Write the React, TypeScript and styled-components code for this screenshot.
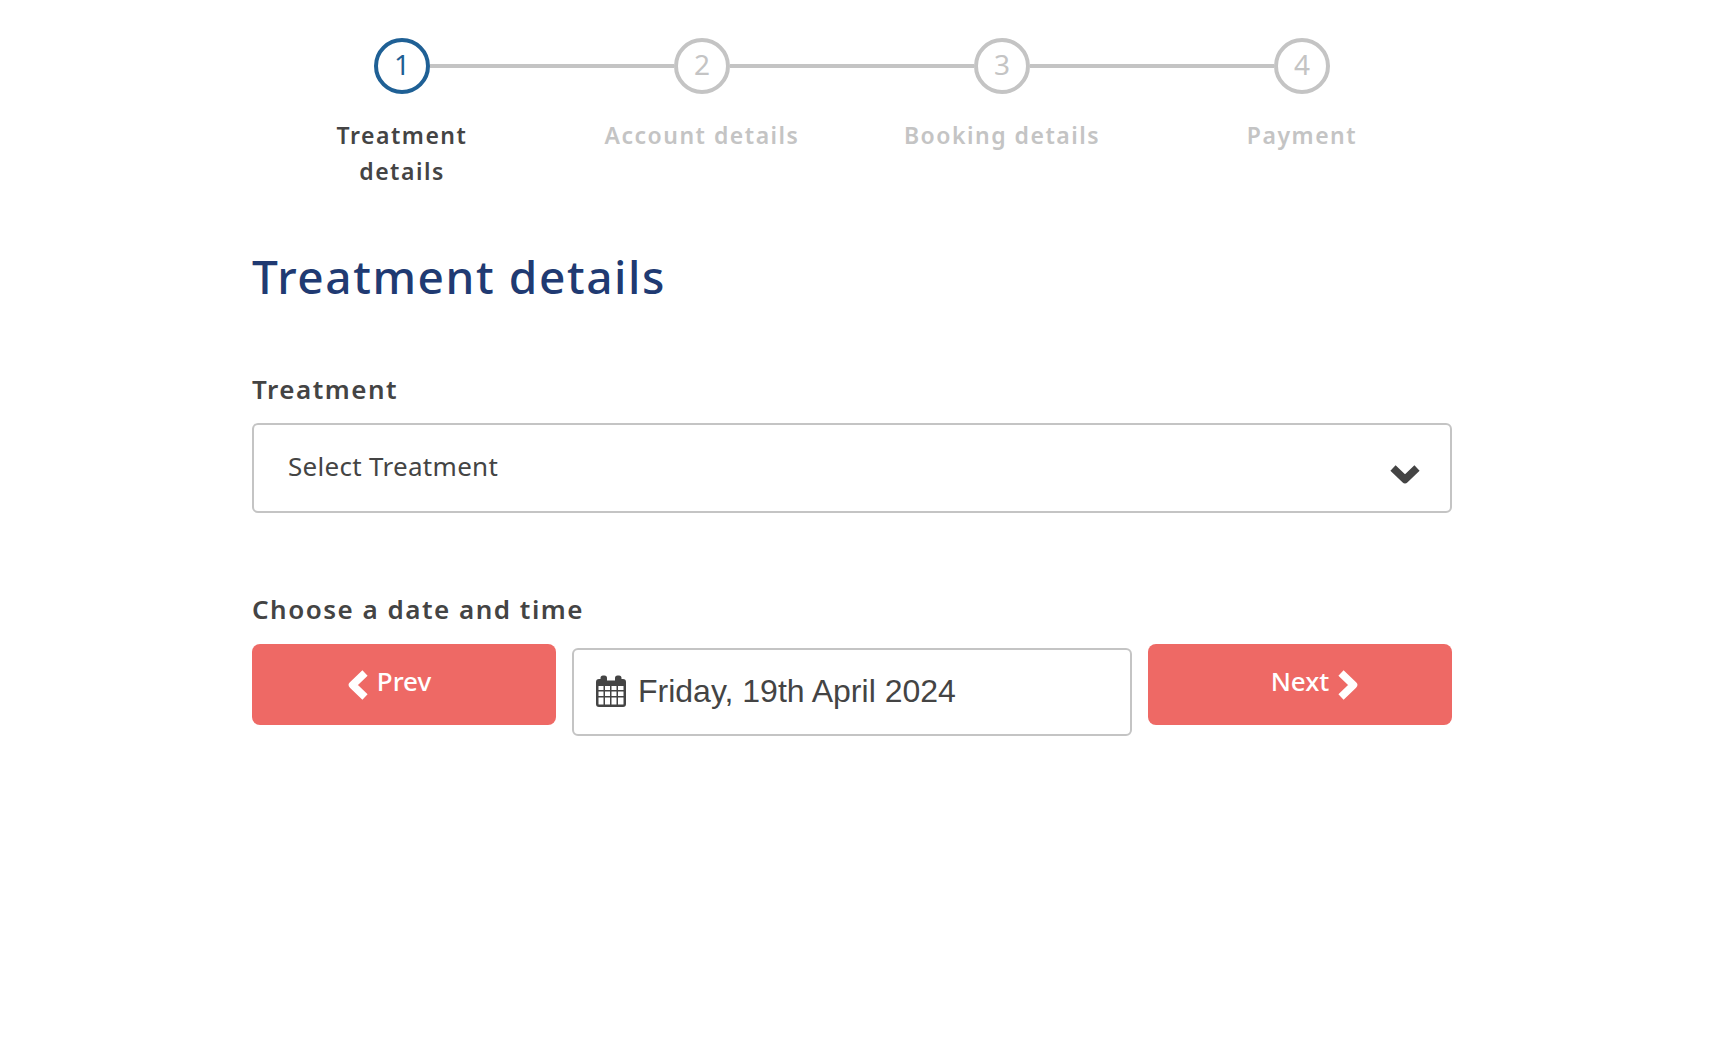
import * as React from 'react';
import styled, {createGlobalStyle} from 'styled-components';

const GlobalStyle = createGlobalStyle`
  html, body {
    margin: 0;
    padding: 0;
    background: #fff;
    font-family: "Noto Sans", "Liberation Sans", sans-serif;
  }
`;

const Page = styled.div`
  width: 1200px;
  min-height: 1060px;
  margin-left: 252px;
  box-sizing: border-box;
  padding-top: 38px;
  color: #444;
`;

const Stepper = styled.ol`
  display: grid;
  grid-template-columns: repeat(4, 300px);
  margin: 0;
  padding: 0;
  list-style: none;
`;

const Step = styled.li<{ $first?: boolean }>`
  position: relative;
  display: flex;
  flex-direction: column;
  align-items: center;

  &::before {
    content: "";
    display: ${props => (props.$first ? 'none' : 'block')};
    position: absolute;
    top: 26px;
    left: -122px;
    width: 244px;
    height: 4px;
    background: #c4c4c4;
  }
`;

const Circle = styled.div<{ $active?: boolean }>`
  width: 56px;
  height: 56px;
  box-sizing: border-box;
  border-radius: 50%;
  border: 4px solid ${props => (props.$active ? '#1f6095' : '#c4c4c4')};
  color: ${props => (props.$active ? '#1f6095' : '#c4c4c4')};
  padding-bottom: 4px;
  display: flex;
  align-items: center;
  justify-content: center;
  font-size: 28px;
  line-height: 1;
`;

const StepLabel = styled.div<{ $active?: boolean }>`
  width: 210px;
  margin-top: 23px;
  text-align: center;
  font-size: 23px;
  line-height: 36px;
  font-weight: 600;
  letter-spacing: 1.5px;
  color: ${props => (props.$active ? '#444' : '#c4c4c4')};
`;

const Heading = styled.h1`
  margin: 55px 0 0;
  font-size: 46px;
  line-height: 64px;
  font-weight: 500;
  letter-spacing: 1.6px;
  color: #203a72;
`;

const FieldLabel = styled.label`
  display: block;
  font-size: 26px;
  line-height: 36px;
  font-weight: 600;
  letter-spacing: 1.5px;
  color: #444;
`;

const TreatmentLabel = styled(FieldLabel)`
  margin-top: 63px;
`;

const DateLabel = styled(FieldLabel)`
  margin-top: 78px;
`;

const Select = styled.div`
  margin-top: 16px;
  height: 90px;
  box-sizing: border-box;
  border: 2px solid #c4c4c4;
  border-radius: 6px;
  padding: 0 30px 5px 34px;
  display: flex;
  align-items: center;
  justify-content: space-between;
  font-size: 26px;
  letter-spacing: 0.3px;
  color: #444;
`;

const SelectChevron = styled.svg`
  width: 30px;
  height: 20px;
  margin-top: 16px;
  fill: none;
  stroke: #444;
  stroke-width: 7.5;
  stroke-linejoin: round;
`;

const DateRow = styled.div`
  margin-top: 17px;
  display: grid;
  grid-template-columns: 304px 560px 304px;
  column-gap: 16px;
  align-items: start;
`;

const NavButton = styled.button<{ $side: 'prev' | 'next' }>`
  height: 81px;
  padding: ${props => (props.$side === 'prev' ? '0 30px 7px 0' : '0 0 7px 30px')};
  border: 0;
  border-radius: 8px;
  background: #ee6965;
  color: #fff;
  display: flex;
  align-items: center;
  justify-content: center;
  gap: 9px;
  font-family: "Noto Sans", sans-serif;
  font-size: 26px;
  font-weight: 500;
`;

const NavChevron = styled.svg`
  width: 21px;
  height: 30px;
  margin-top: 7px;
  fill: none;
  stroke: #fff;
  stroke-width: 7.5;
  stroke-linejoin: round;
`;

const DateBox = styled.div`
  margin-top: 4px;
  height: 88px;
  box-sizing: border-box;
  border: 2px solid #c4c4c4;
  border-radius: 6px;
  padding: 0 0 2px 22px;
  display: flex;
  align-items: center;
  gap: 12px;
  font-family: "Liberation Sans", Arial, sans-serif;
  font-size: 32px;
  color: #444;
`;

const CalendarIcon = styled.svg`
  width: 30px;
  height: 32px;
  flex: none;
  fill: #444;
`;

const Chevron = ({dir}: { dir: 'left' | 'right' }) => (
  <NavChevron viewBox="0 0 21 30">
    <path d={dir === 'left' ? 'M18 3 L5.500 15 L18 27' : 'M3 3 L15.500 15 L3 27'} />
  </NavChevron>
);

const Calendar = () => (
  <CalendarIcon viewBox="0 0 30 32">
    <path fillRule="evenodd" d="M7 0.5h1.5a2.5 2.5 0 0 1 2.5 2.5v2.5h8V3a2.5 2.5 0 0 1 2.5-2.5H23A2.5 2.5 0 0 1 25.500 3v1h1.500A3 3 0 0 1 30 7v22a3 3 0 0 1-3 3H3a3 3 0 0 1-3-3V7a3 3 0 0 1 3-3h1.500V3A2.500 2.500 0 0 1 7 0.500ZM2.500 11v4h5v-4Zm6.500 0v4h5v-4Zm6.500 0v4h5v-4Zm6.500 0v4h5.500v-4ZM2.500 16.500v4.500h5v-4.500Zm6.500 0v4.500h5v-4.500Zm6.500 0v4.500h5v-4.500Zm6.500 0v4.500h5.500v-4.500ZM2.500 22.500V29a.5.5 0 0 0 .5.5h4.500v-7Zm6.500 0v7h5v-7Zm6.500 0v7h5v-7Zm6.500 0v7h5a.5.5 0 0 0 .5-.5v-6.500Z" />
  </CalendarIcon>
);

const steps = ['Treatment details', 'Account details', 'Booking details', 'Payment'];

const App = () => (
  <Page>
    <GlobalStyle />
    <Stepper>
      {steps.map((label, i) => (
        <Step key={label} $first={i === 0}>
          <Circle $active={i === 0}>{i + 1}</Circle>
          <StepLabel $active={i === 0}>{label}</StepLabel>
        </Step>
      ))}
    </Stepper>
    <Heading>Treatment details</Heading>
    <TreatmentLabel>Treatment</TreatmentLabel>
    <Select>
      Select Treatment
      <SelectChevron viewBox="0 0 30 20">
        <path d="M3 4 L15 15.500 L27 4" />
      </SelectChevron>
    </Select>
    <DateLabel>Choose a date and time</DateLabel>
    <DateRow>
      <NavButton $side="prev"><Chevron dir="left" />Prev</NavButton>
      <DateBox><Calendar />Friday, 19th April 2024</DateBox>
      <NavButton $side="next">Next<Chevron dir="right" /></NavButton>
    </DateRow>
  </Page>
);

export default App;
